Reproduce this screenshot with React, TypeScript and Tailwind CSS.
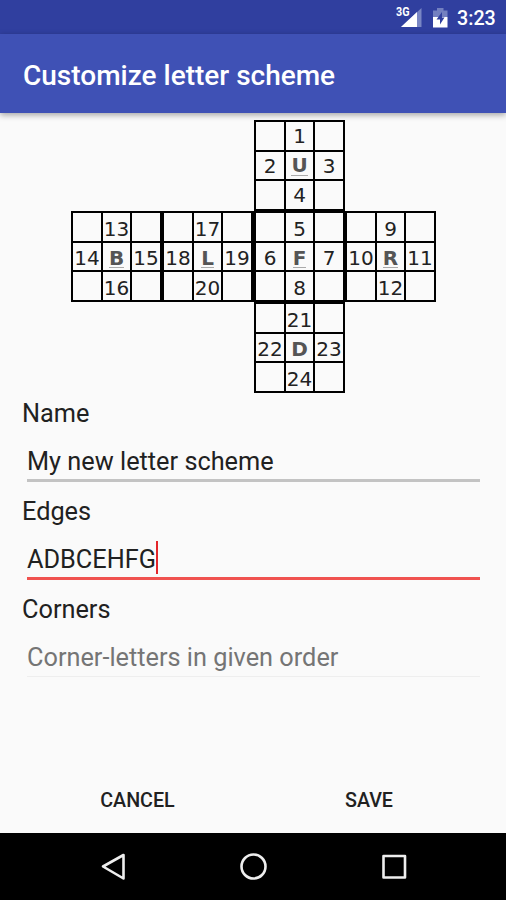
type FaceProps = {
  cells: string[];
  center: string;
  underline?: boolean;
  className?: string;
  digitClass?: string;
  centerClass?: string;
};

function Face({ cells, center, underline = true, className = "w-[91px]", digitClass = "pt-[3px]", centerClass = "mt-[4px]" }: FaceProps) {
  const grid = ["", cells[0], "", cells[1], center, cells[2], "", cells[3], ""];
  return (
    <div className={`grid h-[91px] grid-cols-[28px_27px_28px] grid-rows-[28px_27px_28px] gap-[2px] bg-black p-[2px] ${className}`}>
      {grid.map((label, i) => (
        <div
          key={i}
          className="flex h-full min-h-0 items-center justify-center bg-[#fafafa] font-['DejaVu_Sans',sans-serif] text-[20px] leading-[28px] text-[#222]"
        >
          {i === 4 ? (
            <span className={`flex h-[19px] items-center font-bold leading-[19px] text-[#555] ${centerClass} ${underline ? "border-b border-[#aaa]" : ""}`}>{label}</span>
          ) : (
            <span className={`whitespace-nowrap ${digitClass}`}>{label}</span>
          )}
        </div>
      ))}
    </div>
  );
}

function CubeNet() {
  return (
    <div className="flex h-[280px] flex-col pt-[7px]">
      <Face cells={["1", "2", "3", "4"]} center="U" className="ml-[254px] w-[91px]" digitClass="pt-0" centerClass="mt-[1px]" />
      <div className="ml-[71px] flex">
        <Face cells={["13", "14", "15", "16"]} center="B" />
        <Face cells={["17", "18", "19", "20"]} center="L" />
        <Face cells={["5", "6", "7", "8"]} center="F" className="w-[92px] pl-[3px]" />
        <Face cells={["9", "10", "11", "12"]} center="R" />
      </div>
      <Face cells={["21", "22", "23", "24"]} center="D" underline={false} className="ml-[254px] w-[91px]" centerClass="mt-[3px]" />
    </div>
  );
}

function StatusBar() {
  return (
    <div className="flex h-[34px] items-center bg-[#303f9f] text-white">
      <svg className="ml-[396px] h-[34px] w-[28px] shrink-0" viewBox="0 0 28 34">
        <path d="M25.500 8V27H5Z" fill="#7986c4" />
        <path d="M21 12V27H5Z" fill="#fff" />
        <text x="0" y="16" fontSize="12" fontWeight="700" fontFamily="Roboto, sans-serif" fill="#fff" stroke="#303f9f" strokeWidth="1.5" paintOrder="stroke" textLength="13.500" lengthAdjust="spacingAndGlyphs">3G</text>
      </svg>
      <svg className="ml-[9px] h-[34px] w-[15px] shrink-0" viewBox="0 0 15 34">
        <path d="M4 8h6.500v2.500h4V17H0V10.500h4Z" fill="#7380c0" />
        <path d="M0 17h14.500v10.500H0Z" fill="#fff" />
        <path d="M9 12 3.500 19.500h3.500v5L11.500 17.500H9Z" fill="#303f9f" />
      </svg>
      <span className="ml-[9px] pt-[3px] text-[19.7px] font-medium leading-[34px]">3:23</span>
    </div>
  );
}

export default function App() {
  return (
    <div className="flex h-[900px] w-[506px] flex-col overflow-hidden bg-[#fafafa] font-['Roboto',sans-serif] text-[#212121]">
      <StatusBar />
      <header className="z-10 flex h-[79px] shrink-0 items-center bg-[#3f51b5] pl-[23px] pt-[4px] shadow-[0_2px_6px_rgba(0,0,0,0.35)]">
        <h1 className="text-[28px] font-medium leading-[34px] text-white">Customize letter scheme</h1>
      </header>
      <CubeNet />
      <main className="flex flex-1 flex-col pl-[22px] pr-[26px] text-[25.3px]">
        <label className="h-[40px] leading-[42px]">Name</label>
        <div className="ml-[5px] h-[49px] border-b-[3px] border-[#c3c3c3] pt-[8px] leading-[42px]">My new letter scheme</div>
        <label className="mt-[9px] h-[40px] leading-[42px]">Edges</label>
        <div className="ml-[5px] flex h-[49px] border-b-[3px] border-[#f0524f] pt-[8px] leading-[42px]">
          <span>ADBCEHFG</span>
          <span className="mt-[2px] h-[33px] w-[2px] bg-[#e3262b]" />
        </div>
        <label className="mt-[9px] h-[40px] leading-[42px]">Corners</label>
        <div className="ml-[5px] h-[48px] border-b border-[#eeeeee] pt-[8px] leading-[42px] text-[#757575]">Corner-letters in given order</div>
      </main>
      <div className="flex h-[67px] shrink-0 px-[22px] text-[19.7px] font-medium leading-[69px] text-[#212121]">
        <span className="w-[231px] text-center">CANCEL</span>
        <span className="w-[231px] pl-px text-center">SAVE</span>
      </div>
      <nav className="flex h-[67px] shrink-0 items-center bg-black">
        <svg className="h-[67px] w-[506px]" viewBox="0 0 506 67" fill="none" stroke="#eee" strokeWidth="2.600" strokeLinejoin="round">
          <path d="M103 33.500 123.500 22V45.500Z" />
          <circle cx="253.500" cy="33.500" r="12" />
          <rect x="383.500" y="23" width="21.500" height="21.500" />
        </svg>
      </nav>
    </div>
  );
}
